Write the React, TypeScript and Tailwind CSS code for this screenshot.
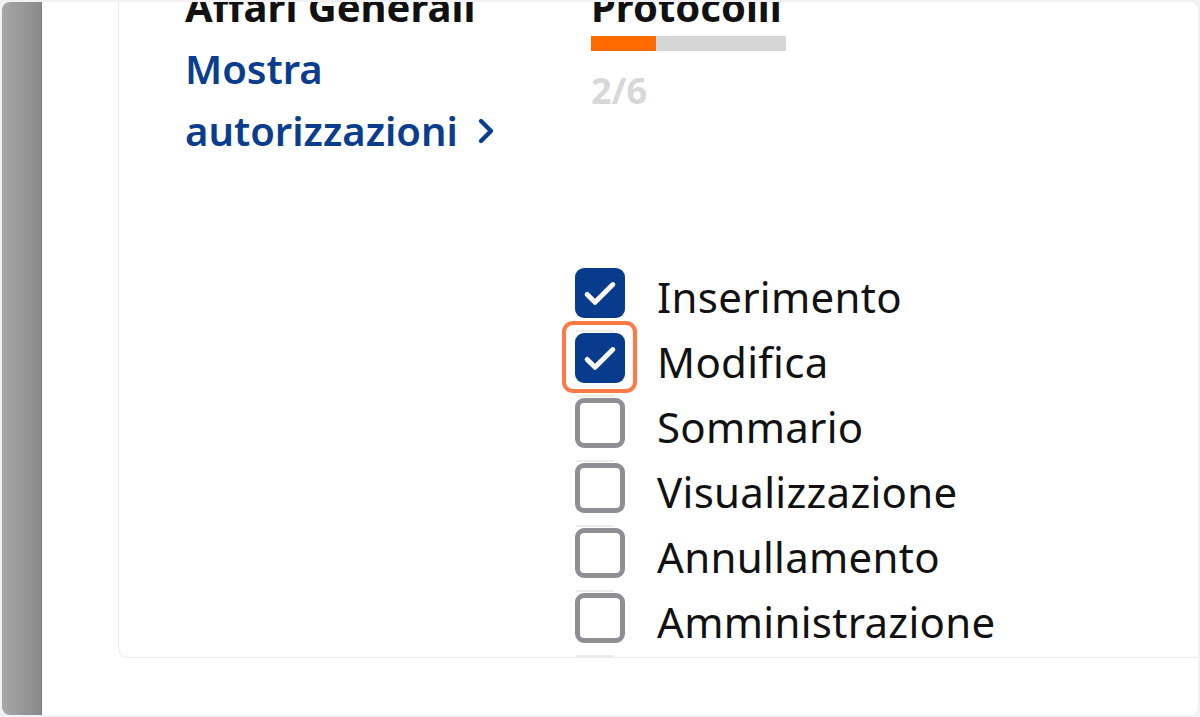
import { ChevronRight } from 'lucide-react'

const items = [
    { label: 'Inserimento', checked: true },
    { label: 'Modifica', checked: true, highlight: true },
    { label: 'Sommario', checked: false },
    { label: 'Visualizzazione', checked: false },
    { label: 'Annullamento', checked: false },
    { label: 'Amministrazione', checked: false },
    { label: 'Firma', checked: false },
]

const font = { fontFamily: '"Noto Sans", "Open Sans", sans-serif' }

const CheckMark = () => (
    <svg viewBox="0 0 24 24" className="size-[44px] shrink-0" fill="none">
        <path
            d="M5 12.8l4.3 4.3L19 7.4"
            stroke="white"
            strokeWidth="2.7"
            strokeLinecap="round"
            strokeLinejoin="round"
        />
    </svg>
)

const Row = ({
    label,
    checked,
    highlight,
    first,
}: {
    label: string
    checked: boolean
    highlight?: boolean
    first?: boolean
}) => (
    <div className="flex flex-col">
        <div
            className={`ml-[1px] h-[2px] w-[38px] ${first ? 'bg-transparent' : 'bg-[#ececef]'}`}
        />
        <div className="mt-[1px] flex h-[50px] items-center gap-[32px]">
            <div className="relative size-[50px] shrink-0">
                {checked ? (
                    <div className="flex size-[50px] items-center justify-center rounded-[9px] bg-[#073b8c]">
                        <CheckMark />
                    </div>
                ) : (
                    <div className="size-[50px] rounded-[9px] border-[5px] border-[#8e8e93] bg-white" />
                )}
                {highlight && (
                    <div className="absolute -top-[12px] -bottom-[10px] -left-[13px] -right-[12px] rounded-[11px] border-[4px] border-[#fd7a47]" />
                )}
            </div>
            <span className="pt-[8px] text-[42px] leading-[50px] tracking-[0.3px] text-[#111]">
                {label}
            </span>
        </div>
        <div className="h-[12px]" />
    </div>
)

export default function App() {
    return (
        <div
            className="h-[717px] w-[1200px] bg-[#f2f2f6] p-[2px]"
            style={font}
        >
            <div className="flex h-full overflow-hidden rounded-[8px] bg-white">
                <div className="w-[40px] shrink-0 border-r border-[#7e7e7e] bg-gradient-to-r from-[#a7a7a7] to-[#8a8a8a]" />
                <div className="flex-1 pl-[76px]">
                    <div className="h-[656px] overflow-hidden rounded-bl-[10px] border-b border-l border-[#ececf0]">
                        <div className="-mt-[19px] flex pl-[66px]">
                            <div className="w-[406px] shrink-0">
                                <div className="text-[40px] font-bold leading-[48px] text-[#111]">
                                    Affari Generali
                                </div>
                                <div className="mt-[7px] text-[40px] font-semibold leading-[62px] text-[#0b3d8e]">
                                    Mostra
                                    <br />
                                    <span className="inline-flex items-center gap-[8px]">
                                        autorizzazioni
                                        <ChevronRight
                                            className="size-[40px]"
                                            strokeWidth={2.6}
                                        />
                                    </span>
                                </div>
                            </div>
                            <div className="flex flex-col">
                                <div className="text-[40px] font-bold leading-[48px] text-[#111]">
                                    Protocolli
                                </div>
                                <div className="mt-[5px] flex h-[15px] w-[195px] bg-[#d6d6d6]">
                                    <div className="h-full w-[65px] bg-[#ff6a00]" />
                                </div>
                                <div className="mt-[20px] text-[36px] font-bold leading-[40px] text-[#d8d8d8]">
                                    2/6
                                </div>
                                <div className="ml-[-16px] mt-[154px] flex flex-col">
                                    {items.map((it, i) => (
                                        <Row key={it.label} first={i === 0} {...it} />
                                    ))}
                                </div>
                            </div>
                        </div>
                    </div>
                </div>
            </div>
        </div>
    )
}
